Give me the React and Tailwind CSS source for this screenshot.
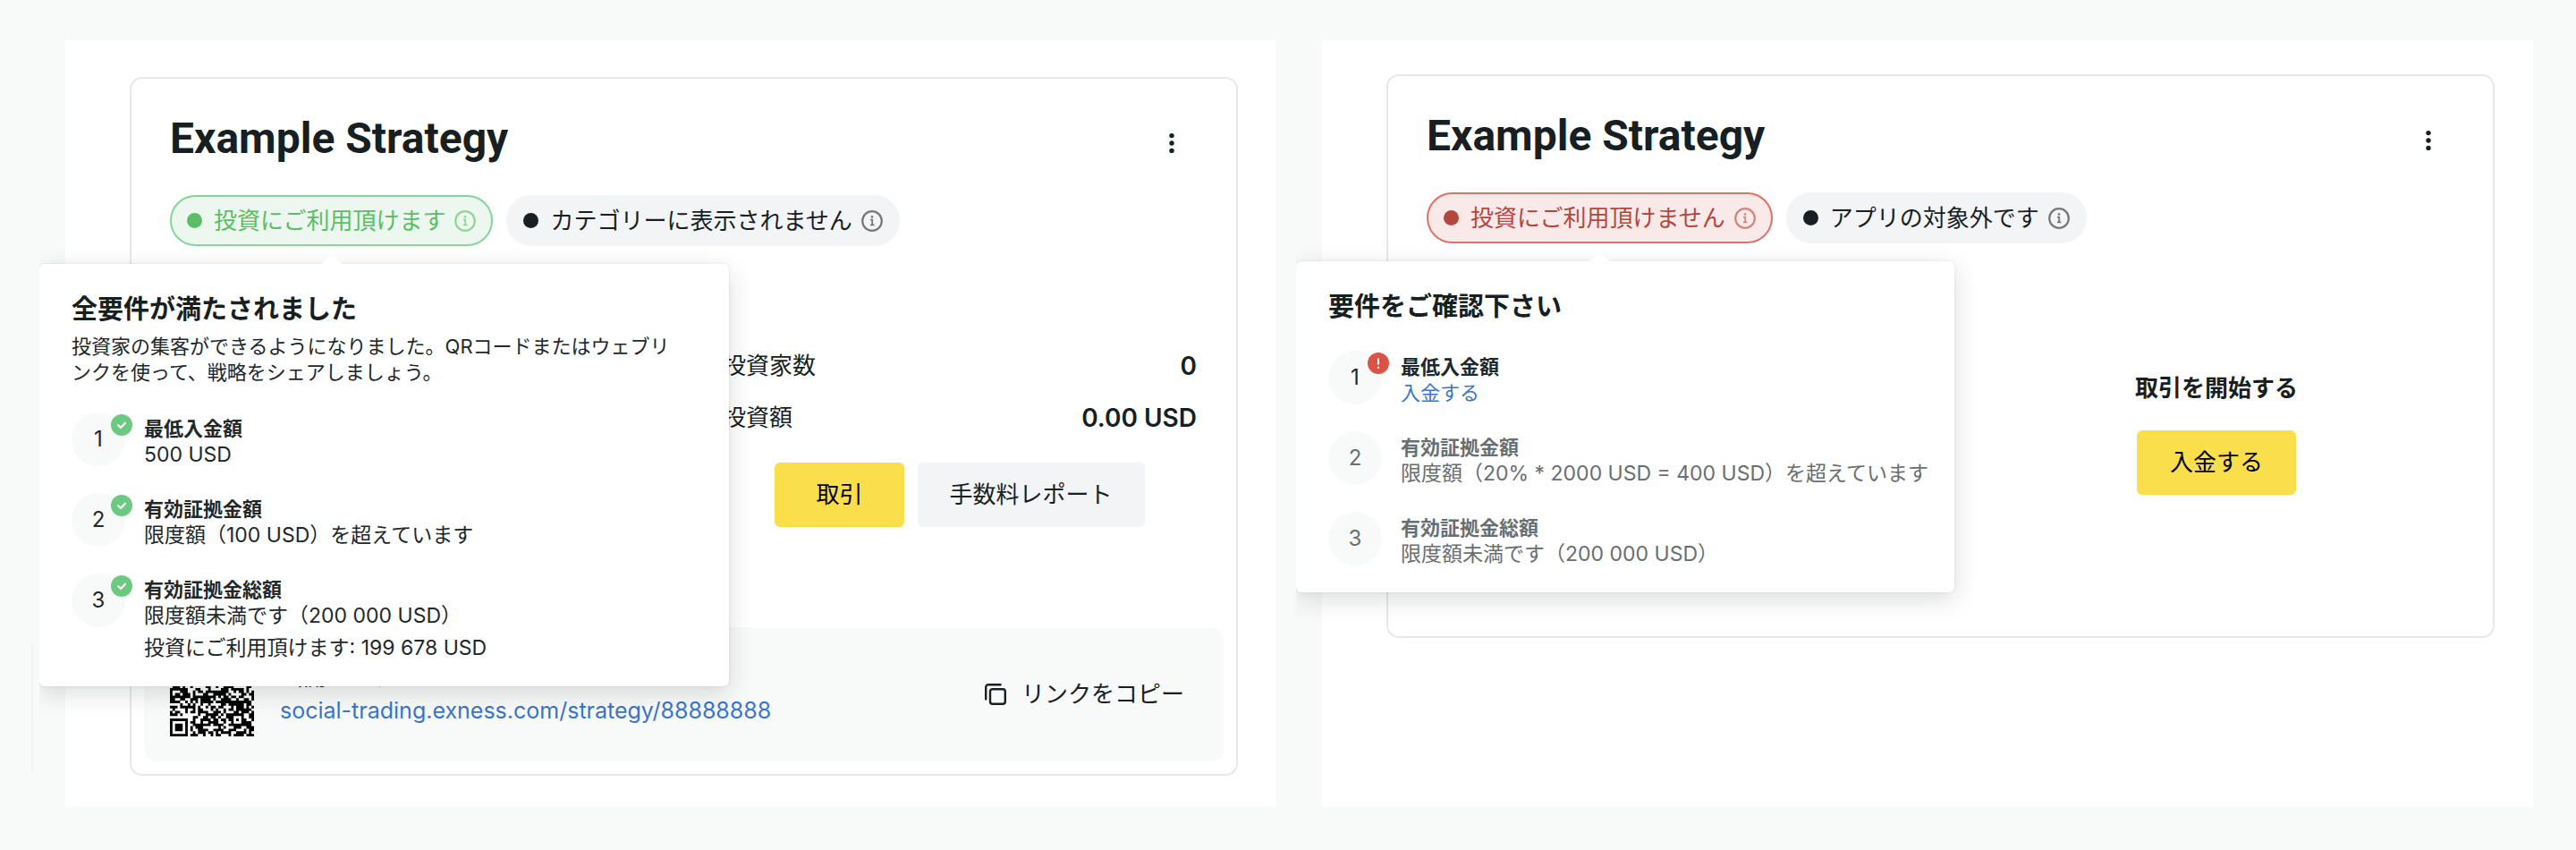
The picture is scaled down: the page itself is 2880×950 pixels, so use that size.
import React from "react";

/* ------------------ DATA ------------------ */
const metRequirements = [
  { title: "最低入金額", text: "500 USD", status: "done" },
  { title: "有効証拠金額", text: "限度額（100 USD）を超えています", status: "done" },
  {
    title: "有効証拠金総額",
    text: "限度額未満です（200 000 USD）",
    extra: "投資にご利用頂けます: 199 678 USD",
    status: "done",
  },
];

const missingRequirements = [
  { title: "最低入金額", link: "入金する", status: "error" },
  {
    title: "有効証拠金額",
    text: "限度額（20% * 2000 USD = 400 USD）を超えています",
    status: "pending",
  },
  { title: "有効証拠金総額", text: "限度額未満です（200 000 USD）", status: "pending" },
];

const pillTones = {
  green: "border-[#84d59b] bg-[#ecf7ef] text-[#5bbd65]",
  red: "border-[#dd7266] bg-[#fae9e9] text-[#b5463d]",
  gray: "border-[#f3f4f6] bg-[#f3f4f6] text-[#171f23]",
};

/* ------------------ ICONS ------------------ */
const InfoIcon = ({ className }) => (
  <svg viewBox="0 0 24 24" className={`size-6 shrink-0 ${className}`} fill="none" stroke="currentColor" strokeWidth="2.2" aria-hidden="true">
    <circle cx="12" cy="12" r="10.8" />
    <path d="M10 10.6h2.2v5.6M10 16.4h4.4" strokeWidth="1.8" />
    <circle cx="12" cy="7.4" r="1.3" fill="currentColor" stroke="none" />
  </svg>
);

const CopyIcon = () => (
  <svg viewBox="0 0 24 24" className="size-6 shrink-0" fill="none" stroke="currentColor" strokeWidth="2.4" strokeLinecap="round" aria-hidden="true">
    <rect x="6" y="6.2" width="16.8" height="16.6" rx="2.6" />
    <path d="M1.2 17.4V4a2.8 2.8 0 0 1 2.8-2.8h13.6" />
  </svg>
);

const StatusBadge = ({ status }) => {
  if (status === "pending") return null;
  return (
    <svg viewBox="0 0 24 24" className="absolute top-0.5 left-11 size-6" fill="none" aria-hidden="true">
      <circle cx="12" cy="12" r="12" fill={status === "done" ? "#6dc982" : "#da5347"} />
      {status === "done" ? (
        <path d="M8.2 12.3l2.8 2.6 5-5.2" stroke="#fff" strokeWidth="2.1" strokeLinecap="round" strokeLinejoin="round" />
      ) : (
        <path d="M12 6.4v7M12 15.8v2" stroke="#fff" strokeWidth="2" />
      )}
    </svg>
  );
};

/* ------------------ QR CODE ------------------ */
const QR_SIZE = 33;

const square = (x, y, left, top, size) => {
  const dx = x - left;
  const dy = y - top;
  if (dx < -1 || dy < -1 || dx > size || dy > size) return null;
  if (dx < 0 || dy < 0 || dx === size || dy === size) return size === 5 ? null : false;
  const ring = Math.min(dx, dy, size - 1 - dx, size - 1 - dy);
  return ring !== 1;
};

const isDark = (x, y) => {
  const marks = [
    square(x, y, 0, 0, 7),
    square(x, y, QR_SIZE - 7, 0, 7),
    square(x, y, 0, QR_SIZE - 7, 7),
    square(x, y, 24, 24, 5),
  ];
  const mark = marks.find((m) => m !== null);
  if (mark !== undefined) return mark;
  const n = Math.sin(x * 12.9898 + y * 78.233) * 43758.5453;
  return n - Math.floor(n) > 0.42;
};

const qrPath = Array.from({ length: QR_SIZE * QR_SIZE }, (_, i) => [i % QR_SIZE, Math.floor(i / QR_SIZE)])
  .filter(([x, y]) => isDark(x, y))
  .map(([x, y]) => `M${x} ${y}h1v1h-1z`)
  .join("");

const QrCode = () => (
  <svg viewBox="0 0 33 33" className="size-[94px] shrink-0 bg-white" role="img" aria-label="QR">
    <path d={qrPath} fill="#000" />
  </svg>
);

/* ------------------ PARTS ------------------ */
const Pill = ({ tone, label, children }) => (
  <div className="relative">
    <button
      type="button"
      className={`flex h-[57px] items-center rounded-full border-2 px-[17px] text-[26px] leading-9 whitespace-nowrap ${pillTones[tone]}`}
    >
      <span className="mr-[13px] size-[17px] rounded-full bg-current" />
      {label}
      <InfoIcon className={tone === "gray" ? "ml-2.5 text-[#74797d]" : "ml-2.5 opacity-60"} />
    </button>
    {children}
  </div>
);

const Requirement = ({ item, number }) => {
  const muted = item.status === "pending";
  return (
    <li className={`flex gap-[21px] ${muted ? "text-[#696e70]" : "text-[#20282c]"}`}>
      <div className="relative flex size-[60px] shrink-0 items-center justify-center rounded-full bg-[#f8faf9] text-2xl">
        {number}
        <StatusBadge status={item.status} />
      </div>
      <div className="pt-1 text-[23px] leading-[29px] whitespace-nowrap">
        <h3 className="text-[22px] leading-[29px] font-bold">{item.title}</h3>
        {item.link ? (
          <a href="#deposit" className="block text-[22px] leading-[29px] text-[#3b74cf]">{item.link}</a>
        ) : (
          <p>{item.text}</p>
        )}
        {item.extra && <p className="mt-[7px]">{item.extra}</p>}
      </div>
    </li>
  );
};

const Popover = ({ title, text, items, width }) => (
  <>
    <div
      className={`absolute top-full -left-[146px] z-10 mt-5 rounded-md bg-white pt-8 pr-10 pb-7 pl-9 text-[#171f23] shadow-[0_8px_28px_rgba(20,30,30,0.15),0_0_3px_rgba(20,30,30,0.1)] [clip-path:inset(-60px_-60px_-60px_0)] ${width}`}
    >
      <h2 className="text-[29px] leading-[38px] font-bold">{title}</h2>
      {text && <p className="mt-2 pr-3 text-[22px] leading-[29px] text-[#20282c]">{text}</p>}
      <ol className="mt-[30px] flex flex-col gap-7">
        {items.map((item, i) => (
          <Requirement key={item.title} item={item} number={i + 1} />
        ))}
      </ol>
    </div>
    <span className="absolute top-full left-1/2 z-10 mt-3 size-4 -translate-x-1/2 rotate-45 bg-white" />
  </>
);

const CardHeader = ({ children }) => (
  <>
    <div className="flex items-start justify-between">
      <h1 className="font-[Roboto] text-5xl leading-14 font-bold">Example Strategy</h1>
      <button type="button" aria-label="メニュー" className="flex h-[66px] w-14 items-center justify-center">
        <svg viewBox="0 0 6 24" className="h-6 w-1.5" fill="currentColor" aria-hidden="true">
          <circle cx="3" cy="3.6" r="2.7" />
          <circle cx="3" cy="12" r="2.7" />
          <circle cx="3" cy="20.4" r="2.7" />
        </svg>
      </button>
    </div>
    <div className="mt-[25px] flex gap-[15px]">{children}</div>
  </>
);

const Stat = ({ label, value }) => (
  <div className="flex items-center justify-between leading-9">
    <dt className="text-[26px]">{label}</dt>
    <dd className="text-[28px] font-semibold">{value}</dd>
  </div>
);

/* ------------------ PAGE ------------------ */
const App = () => (
  <main className="flex min-h-screen gap-[51px] bg-[#f8faf9] pt-[45px] pr-12 pb-12 pl-[73px] font-[Inter,'Noto_Sans_CJK_JP',sans-serif] text-[#171f23]">
    {/* ---------- REQUIREMENTS MET ---------- */}
    <section className="relative min-w-0 flex-1 bg-white pt-[41px] pr-[43px] pb-[35px] pl-[72px]">
      <span className="absolute bottom-10 -left-[38px] h-36 w-0.5 bg-[#f0f2f2]" />
      <article className="rounded-[14px] border-2 border-[#e7e8e8] pb-3.5">
        <div className="pt-[39px] pr-11 pl-[43px]">
          <CardHeader>
            <Pill tone="green" label="投資にご利用頂けます">
              <Popover
                title="全要件が満たされました"
                text="投資家の集客ができるようになりました。QRコードまたはウェブリンクを使って、戦略をシェアしましょう。"
                items={metRequirements}
                width="w-[771px]"
              />
            </Pill>
            <Pill tone="gray" label="カテゴリーに表示されません" />
          </CardHeader>

          <div className="mt-[116px] ml-auto w-[530px]">
            <dl className="flex flex-col gap-[22px]">
              <Stat label="投資家数" value="0" />
              <Stat label="投資額" value="0.00 USD" />
            </dl>
            <div className="mt-8 flex justify-center gap-[15px] text-[26px] leading-9">
              <button type="button" className="h-[72px] rounded-md bg-[#fade4b] px-[46px] text-black">取引</button>
              <button type="button" className="h-[72px] rounded-md bg-[#f3f4f6] px-9">手数料レポート</button>
            </div>
          </div>
        </div>

        <div className="mx-3.5 mt-28 flex items-center rounded-[14px] bg-[#f8faf9] py-7 pr-11 pl-[29px]">
          <QrCode />
          <div className="ml-[29px] leading-9">
            <p className="text-[26px] leading-9">公開リンク</p>
            <a href="https://social-trading.exness.com/strategy/88888888" className="block text-[25px] leading-[38px] text-[#3b74cf]">
              social-trading.exness.com/strategy/88888888
            </a>
          </div>
          <button type="button" className="ml-auto flex items-center gap-[17px] text-[26px] leading-9">
            <CopyIcon />
            リンクをコピー
          </button>
        </div>
      </article>
    </section>

    {/* ---------- REQUIREMENTS MISSING ---------- */}
    <section className="min-w-0 flex-1 bg-white pt-[38px] pr-[43px] pb-[35px] pl-[72px]">
      <article className="rounded-[14px] border-2 border-[#e7e8e8] pt-[39px] pr-11 pb-[158px] pl-[43px]">
        <CardHeader>
          <Pill tone="red" label="投資にご利用頂けません">
            <Popover title="要件をご確認下さい" items={missingRequirements} width="w-[736px]" />
          </Pill>
          <Pill tone="gray" label="アプリの対象外です" />
        </CardHeader>

        <div className="mt-36 ml-auto flex w-[530px] flex-col items-center text-[26px] leading-9">
          <h2 className="font-bold">取引を開始する</h2>
          <button type="button" className="mt-[29px] h-[72px] rounded-md bg-[#fade4b] px-[37px] text-black">入金する</button>
        </div>
      </article>
    </section>
  </main>
);

export default App;
